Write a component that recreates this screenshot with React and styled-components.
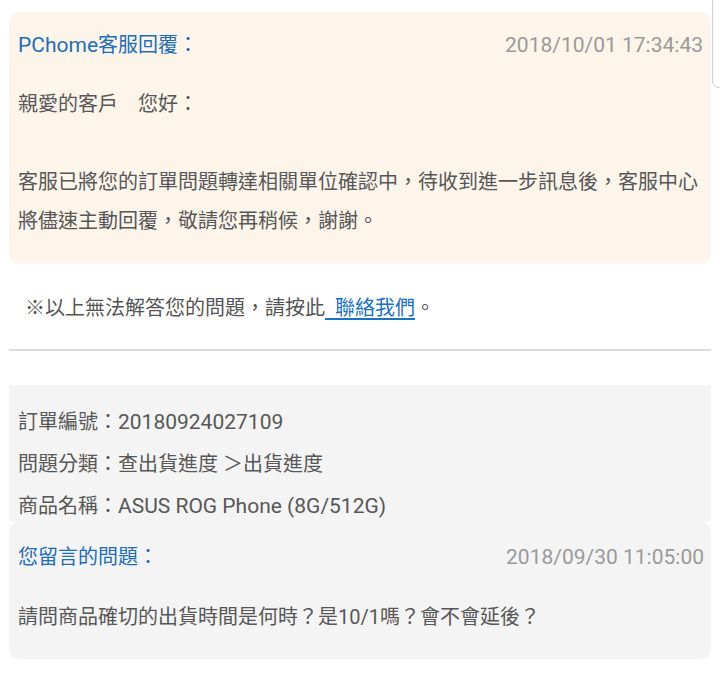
import React from "react";
import styled, { createGlobalStyle } from "styled-components";

const Global = createGlobalStyle`
  html, body { margin: 0; padding: 0; background: #ffffff; }
  body {
    font-family: Roboto, "Noto Sans CJK TC", "Noto Sans", sans-serif;
    font-size: 20px;
    color: #575757;
  }
`;

const Page = styled.div`
  position: relative;
  padding: 12px 9px 14px;
  display: flex;
  flex-direction: column;
  overflow: hidden;
`;

const ScrollHint = styled.div`
  position: absolute;
  top: -10px;
  left: 712px;
  width: 30px;
  height: 98px;
  border: 1.5px solid #cfcfcf;
  border-radius: 7px;
  background: #ffffff;
  box-sizing: border-box;
`;

const Card = styled.section`
  background: ${(p) => p.$bg};
  border-radius: ${(p) => p.$radius ?? "10px"};
  padding: ${(p) => p.$pad};
  display: flex;
  flex-direction: column;
  gap: ${(p) => p.$gap ?? "20px"};
`;

const HeaderRow = styled.div`
  display: flex;
  justify-content: space-between;
  align-items: center;
  line-height: 39px;
`;

const Title = styled.h2`
  margin: 0;
  font-size: 20px;
  font-weight: 400;
  color: #1f6db4;
`;

const Latin = styled.span`
  font-size: 21px;
`;

const Stamp = styled.span`
  font-size: 21px;
  color: #9a9a9a;
`;

const Body = styled.p`
  margin: 0;
  line-height: 39px;
  color: #575757;
`;

const Note = styled.p`
  margin: 25px 0 0;
  padding-left: 16px;
  line-height: 39px;
  color: #555555;
`;

const Link = styled.a`
  color: #1b72c2;
  text-decoration: underline;
  text-underline-offset: 3px;
`;

const Divider = styled.hr`
  margin: 21px 0 0;
  border: none;
  height: 2px;
  background: #dcdcdc;
`;

const InfoBox = styled.div`
  margin-top: 34px;
  background: #f4f4f4;
  padding: 25px 9px 3px;
  display: flex;
  flex-direction: column;
  gap: 18px;
`;

const InfoRow = styled.div`
  line-height: 24px;
  color: #575757;
  white-space: nowrap;
`;

export default function App() {
  return (
    <>
      <Global />
      <Page>
        <ScrollHint />
        <Card $bg="#fdf4ea" $pad="14px 8px 23px 9px">
          <HeaderRow>
            <Title>
              <Latin>PChome</Latin>客服回覆：
            </Title>
            <Stamp>2018/10/01 17:34:43</Stamp>
          </HeaderRow>
          <Body>
            親愛的客戶　您好：
            <br />
            <br />
            客服已將您的訂單問題轉達相關單位確認中，待收到進一步訊息後，客服中心將儘速主動回覆，敬請您再稍候，謝謝。
          </Body>
        </Card>

        <Note>
          ※以上無法解答您的問題，請按此<Link href="#">{"\u00a0\u00a0聯絡我們"}</Link>。
        </Note>

        <Divider />

        <InfoBox>
          <InfoRow>
            訂單編號：<Latin>20180924027109</Latin>
          </InfoRow>
          <InfoRow>問題分類：查出貨進度 ＞出貨進度</InfoRow>
          <InfoRow>
            商品名稱：<Latin>ASUS ROG Phone (8G/512G)</Latin>
          </InfoRow>
        </InfoBox>

        <Card $bg="#f4f4f4" $pad="17px 7px 22px 9px" $gap="21px">
          <HeaderRow>
            <Title>您留言的問題：</Title>
            <Stamp>2018/09/30 11:05:00</Stamp>
          </HeaderRow>
          <Body>請問商品確切的出貨時間是何時？是10/1嗎？會不會延後？</Body>
        </Card>
      </Page>
    </>
  );
}
